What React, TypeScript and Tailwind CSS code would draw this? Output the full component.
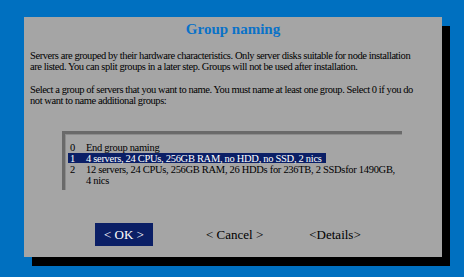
import React from "react";

export default function App() {
  const serif = { fontFamily: '"Liberation Serif", "Times New Roman", serif' };
  return (
    <div className="w-[464px] h-[277px] bg-[#0070c0] pl-[24px] pt-[17px] overflow-hidden" style={serif}>
      <div className="w-[418px] h-[240px] bg-[#a5a5a5] shadow-[8px_9px_0_0_#000] flex flex-col text-black">
        <div className="h-[23px] mt-[1px] text-center text-[15px] font-bold text-[#0a72c8] leading-[23px]">
          Group naming
        </div>
        <div className="pl-[6px] mt-[9px] text-[10.5px] leading-[11px] tracking-[-0.43px] whitespace-nowrap">
          <div>Servers are grouped by their hardware characteristics. Only server disks suitable for node installation</div>
          <div>are listed. You can split groups in a later step. Groups will not be used after installation.</div>
          <div className="mt-[12px]">Select a group of servers that you want to name. You must name at least one group. Select 0 if you do</div>
          <div>not want to name additional groups:</div>
        </div>
        <div className="ml-[38px] mt-[25px] w-[340px] h-[59px] border-t-[3px] border-l-[3px] border-t-[#6a6a6a] border-l-[#6a6a6a]">
          <div className="h-full border-t border-l border-t-[#8c8c8c] border-l-[#8c8c8c] pt-[7px] pl-[2px] text-[10.5px] leading-[11px] tracking-[-0.3px] whitespace-nowrap">
            <div className="flex h-[10px] items-center">
              <span className="w-[18px] shrink-0 pl-[2px]">0</span>
              <span>End group naming</span>
            </div>
            <div className="flex h-[10px] items-center bg-[#0b1f66] text-white w-[258px] mt-[1px]">
              <span className="w-[18px] shrink-0 pl-[2px]">1</span>
              <span>4 servers, 24 CPUs, 256GB RAM, no HDD, no SSD, 2 nics</span>
            </div>
            <div className="flex mt-[1px]">
              <span className="w-[18px] shrink-0 pl-[2px]">2</span>
              <span>
                12 servers, 24 CPUs, 256GB RAM, 26 HDDs for 236TB, 2 SSDsfor 1490GB,
                <br />
                4 nics
              </span>
            </div>
          </div>
        </div>
        <div className="flex items-center mt-[33px] text-[13px] leading-none">
          <div className="ml-[71px] w-[58px] h-[23px] bg-[#0b1f66] text-white flex items-center justify-center">
            &lt; OK &gt;
          </div>
          <div className="ml-[53px]">&lt; Cancel &gt;</div>
          <div className="ml-[46px]">&lt;Details&gt;</div>
        </div>
      </div>
    </div>
  );
}
